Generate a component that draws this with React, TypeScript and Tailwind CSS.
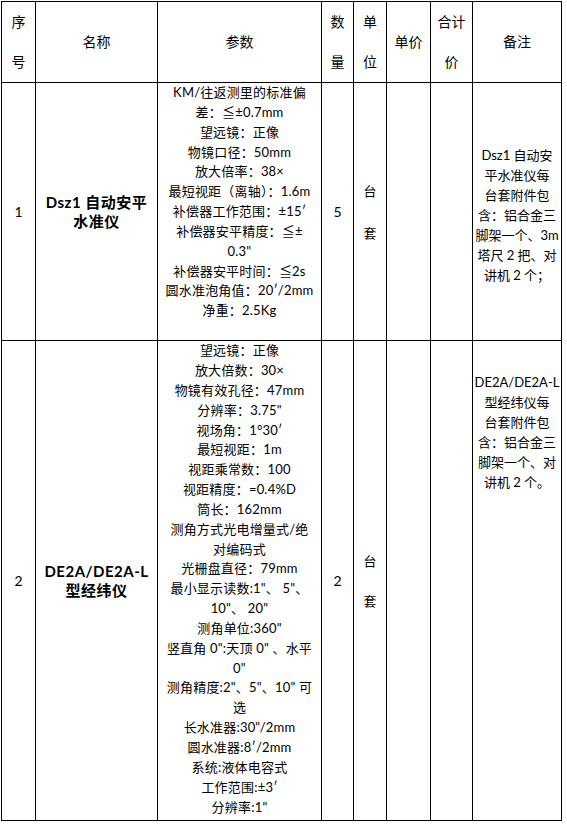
const row1Params = [
  "KM/往返测里的标准偏",
  "差：≦±0.7mm",
  "望远镜：正像",
  "物镜口径：50mm",
  "放大倍率：38×",
  "最短视距（离轴）：1.6m",
  "补偿器工作范围：±15′",
  "补偿器安平精度：≦±",
  "0.3\"",
  "补偿器安平时间：≦2s",
  "圆水准泡角值：20′/2mm",
  "净重：2.5Kg",
];

const row2Params = [
  "望远镜：正像",
  "放大倍数：30×",
  "物镜有效孔径：47mm",
  "分辨率：3.75\"",
  "视场角：1°30′",
  "最短视距：1m",
  "视距乘常数：100",
  "视距精度：=0.4%D",
  "筒长：162mm",
  "测角方式光电增量式/绝",
  "对编码式",
  "光栅盘直径：79mm",
  "最小显示读数:1\"、 5\"、",
  "10\"、 20\"",
  "测角单位:360\"",
  "竖直角 0\":天顶 0\" 、水平",
  "0\"",
  "测角精度:2\"、5\"、10\" 可",
  "选",
  "长水准器:30\"/2mm",
  "圆水准器:8′/2mm",
  "系统:液体电容式",
  "工作范围:±3′",
  "分辨率:1\"",
];

const row1Note = ["Dsz1 自动安", "平水准仪每", "台套附件包", "含：铝合金三", "脚架一个、3m", "塔尺 2 把、对", "讲机 2 个；"];
const row2Note = ["DE2A/DE2A-L", "型经纬仪每", "台套附件包", "含：铝合金三", "脚架一个、对", "讲机 2 个。"];

function Lines({ lines }: { lines: string[] }) {
  return (
    <>
      {lines.map((line, i) => (
        <div key={i} className="whitespace-nowrap">
          {line}
        </div>
      ))}
    </>
  );
}

const cell = "border border-black text-center";

export default function App() {
  return (
    <div className="min-h-[828px] bg-white pl-px pt-px text-black font-['Lato','Noto_Sans_CJK_SC',sans-serif]">
      <table className="w-[560px] table-fixed border-collapse">
        <colgroup>
          <col className="w-[34px]" />
          <col className="w-[122px]" />
          <col className="w-[164px]" />
          <col className="w-[32px]" />
          <col className="w-[33px]" />
          <col className="w-[44px]" />
          <col className="w-[42px]" />
          <col className="w-[89px]" />
        </colgroup>
        <thead>
          <tr className="h-[81px] text-[14px] leading-[40px]">
            <th className={`${cell} font-normal`}>
              序<br />号
            </th>
            <th className={`${cell} font-normal`}>名称</th>
            <th className={`${cell} font-normal`}>参数</th>
            <th className={`${cell} font-normal`}>
              数<br />量
            </th>
            <th className={`${cell} font-normal`}>
              单<br />位
            </th>
            <th className={`${cell} font-normal`}>单价</th>
            <th className={`${cell} font-normal`}>
              合计<br />价
            </th>
            <th className={`${cell} font-normal`}>备注</th>
          </tr>
        </thead>
        <tbody className="text-[13px] leading-[19.85px]">
          <tr className="h-[257px]">
            <td className={`${cell} text-[14px]`}>1</td>
            <td className={`${cell} text-[15px] font-bold leading-[19px] tracking-[0.5px]`}>
              Dsz1 自动安平
              <br />
              水准仪
            </td>
            <td className={`${cell} px-1 pb-[19px] align-top tracking-[0.2px]`}>
              <Lines lines={row1Params} />
            </td>
            <td className={`${cell} text-[14px]`}>5</td>
            <td className={`${cell} leading-[42px]`}>
              台<br />套
            </td>
            <td className={cell}></td>
            <td className={cell}></td>
            <td className={`${cell} pt-[62px] align-top leading-[20px]`}>
              <Lines lines={row1Note} />
            </td>
          </tr>
          <tr className="h-[480px]">
            <td className={`${cell} text-[14px]`}>2</td>
            <td className={`${cell} text-[15px] font-bold leading-[19px] tracking-[0.5px]`}>
              DE2A/DE2A-L
              <br />
              型经纬仪
            </td>
            <td className={`${cell} px-1 align-top tracking-[0.2px]`}>
              <Lines lines={row2Params} />
            </td>
            <td className={`${cell} text-[14px]`}>2</td>
            <td className={`${cell} leading-[40px]`}>
              台<br />套
            </td>
            <td className={cell}></td>
            <td className={cell}></td>
            <td className={`${cell} pt-[31px] align-top leading-[20px]`}>
              <Lines lines={row2Note} />
            </td>
          </tr>
        </tbody>
      </table>
    </div>
  );
}
